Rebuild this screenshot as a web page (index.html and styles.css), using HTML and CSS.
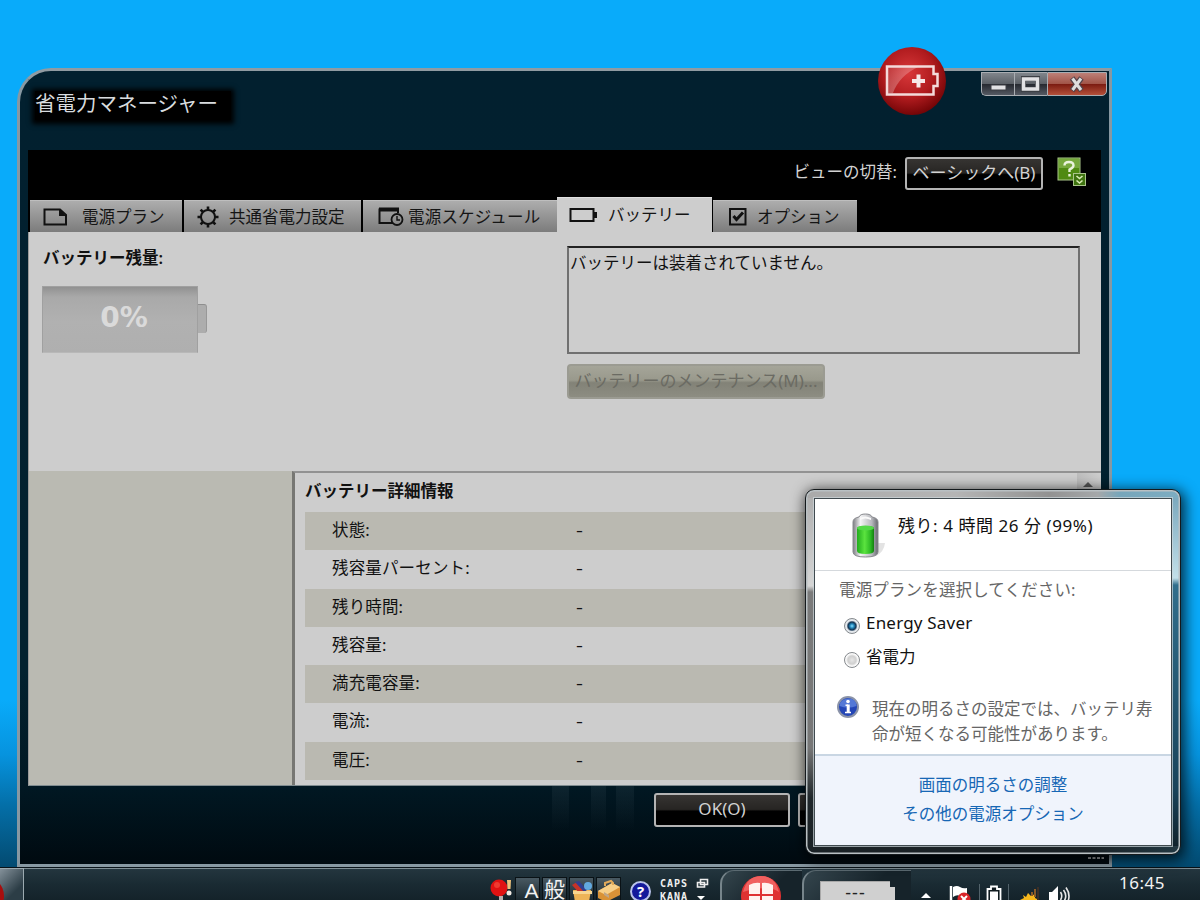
FILE: index.html
```html
<!DOCTYPE html>
<html lang="ja">
<head>
  <meta charset="UTF-8" />
  <meta name="viewport" content="width=device-width, initial-scale=1.0"/>
  <title>省電力マネージャー</title>
  <link rel="stylesheet" href="styles.css">
</head>
<body>
  <div class="desktop">

    <div class="window">
      <header class="window-header">
        <h1 class="window-title">省電力マネージャー</h1>
      </header>

      <svg class="window-logo" width="70" height="70" viewBox="0 0 70 70">
        <defs>
          <radialGradient id="ball" cx="45%" cy="38%" r="62%">
            <stop offset="0" stop-color="#d8383a"/>
            <stop offset=".6" stop-color="#b01b1e"/>
            <stop offset="1" stop-color="#740507"/>
          </radialGradient>
          <linearGradient id="shine" x1="0" y1="0" x2="1" y2="1">
            <stop offset="0" stop-color="#fff" stop-opacity=".1"/>
            <stop offset="1" stop-color="#fff" stop-opacity=".4"/>
          </linearGradient>
        </defs>
        <circle cx="35" cy="35" r="34" fill="url(#ball)"/>
        <path d="M11 21H41Q22 30 16 47H11Z" fill="url(#shine)"/>
        <path d="M10 20.500H56.500V28H60.500V40H56.500V48.500H10Z" fill="none" stroke="#f4dada" stroke-width="2.500"/>
        <path d="M35 35H48M41.500 28.500V41.500" stroke="#f6e8e8" stroke-width="4"/>
      </svg>

      <div class="window-controls">
        <span class="control"><svg width="32" height="23"><rect x="9" y="12" width="15" height="5" fill="#e2e2e4" stroke="#3c3f45"/></svg></span>
        <span class="control"><svg width="32" height="23"><path d="M8.500 5.500H22.500V16.500H8.500Z" fill="none" stroke="#3c3f45" stroke-width="5"/><path d="M8.500 6H22.500V16H8.500Z" fill="none" stroke="#e2e2e4" stroke-width="3.500"/></svg></span>
        <span class="control close"><svg width="58" height="23"><path d="M24 5L33.500 17.500M33.500 5L24 17.500" stroke="#54434a" stroke-width="5.500"/><path d="M24.500 5.500L33 17M33 5.500L24.500 17" stroke="#dedede" stroke-width="3"/></svg></span>
      </div>

      <main class="window-body">
        <div class="view-bar">
          <span class="view-label">ビューの切替:</span>
          <button class="btn btn-view">ベーシックへ(B)</button>
          <svg class="help-icon" width="30" height="30" viewBox="0 0 30 30">
            <rect x="1" y="1" width="22" height="22" fill="#4f8a12" stroke="#a9c58a"/>
            <rect x="2" y="2" width="20" height="9" fill="#76a83c"/>
            <path d="M7.500 8.500Q7.500 5 12 5Q16.500 5 16.500 8.500Q16.500 10.500 12.500 12.500V15M12.500 17V19.500" fill="none" stroke="#eaf2dc" stroke-width="2.400"/>
            <rect x="16.500" y="16.500" width="12" height="12" fill="#3f7410" stroke="#a9c58a"/>
            <path d="M19.500 19L22.500 21.500L25.500 19M19.500 23.500L22.500 26L25.500 23.500" fill="none" stroke="#d8ebb4" stroke-width="1.600"/>
          </svg>
        </div>

        <nav class="tabs">
          <a class="tab tab-plan">
            <svg width="26" height="20" viewBox="0 0 26 20"><path d="M1.500 2.500H17L23 8V17.500H1.500Z" fill="none" stroke="#111" stroke-width="2"/><path d="M16 2L23 9H16Z" fill="#111"/></svg>
            <span>電源プラン</span>
          </a>
          <a class="tab tab-common">
            <svg width="24" height="24" viewBox="0 0 24 24"><circle cx="12" cy="12" r="7" fill="none" stroke="#111" stroke-width="2"/><path d="M12 1.500V5M12 19V22.500M1.500 12H5M19 12H22.500M4.600 4.600L7 7M17 17L19.400 19.400M4.600 19.400L7 17M17 7L19.400 4.600" stroke="#111" stroke-width="2.600"/></svg>
            <span>共通省電力設定</span>
          </a>
          <a class="tab tab-schedule">
            <svg width="26" height="20" viewBox="0 0 26 20"><path d="M15 16H1.500V2.500H20V6" fill="none" stroke="#111" stroke-width="2"/><path d="M1 2.500H21" stroke="#111" stroke-width="4"/><circle cx="19" cy="12.500" r="5.500" fill="none" stroke="#111" stroke-width="1.800"/><path d="M19 9V13H22" fill="none" stroke="#111" stroke-width="1.400"/></svg>
            <span>電源スケジュール</span>
          </a>
          <a class="tab tab-battery active">
            <svg width="28" height="16" viewBox="0 0 28 16"><path d="M1.500 2H24.500V14H1.500Z" fill="none" stroke="#111" stroke-width="2"/><rect x="25" y="5" width="3" height="6" fill="#111"/></svg>
            <span>バッテリー</span>
          </a>
          <a class="tab tab-option">
            <svg width="20" height="20" viewBox="0 0 20 20"><path d="M2 2H17.500V17.500H2Z" fill="none" stroke="#111" stroke-width="2"/><path d="M5.500 9L8.500 12.500L15 5.500" fill="none" stroke="#111" stroke-width="3"/></svg>
            <span>オプション</span>
          </a>
        </nav>

        <section class="summary">
          <div class="remaining">
            <h2 class="label-strong">バッテリー残量:</h2>
            <div class="gauge">
              <div class="gauge-body">0%</div>
              <div class="gauge-tip"></div>
            </div>
          </div>
          <div class="status">
            <div class="status-box">バッテリーは装着されていません。</div>
            <button class="btn-disabled" disabled>バッテリーのメンテナンス(M)...</button>
          </div>
        </section>

        <section class="details">
          <aside class="battery-list"></aside>
          <div class="info">
            <h2 class="label-strong info-title">バッテリー詳細情報</h2>
            <dl class="info-rows">
              <div class="info-row"><dt>状態:</dt><dd>-</dd></div>
              <div class="info-row"><dt>残容量パーセント:</dt><dd>-</dd></div>
              <div class="info-row"><dt>残り時間:</dt><dd>-</dd></div>
              <div class="info-row"><dt>残容量:</dt><dd>-</dd></div>
              <div class="info-row"><dt>満充電容量:</dt><dd>-</dd></div>
              <div class="info-row"><dt>電流:</dt><dd>-</dd></div>
              <div class="info-row"><dt>電圧:</dt><dd>-</dd></div>
            </dl>
          </div>
          <div class="scrollbar"><span class="scroll-up"></span></div>
        </section>
      </main>

      <footer class="window-footer">
        <button class="btn btn-ok">OK(O)</button>
        <button class="btn btn-cancel"></button>
      </footer>
      <svg class="grip" width="18" height="4"><path d="M1 2H17" stroke="#a9adb0" stroke-width="2" stroke-dasharray="3 1.500"/></svg>
    </div>

    <!-- Barra de tareas -->
    <div class="taskbar">
      <div class="start"><span class="start-ball"></span></div>

      <div class="lang-bar">
        <svg class="lang-ball" width="24" height="26" viewBox="0 0 24 26">
          <circle cx="9" cy="11" r="8.500" fill="#e01212"/><circle cx="7" cy="8" r="3" fill="#f03a30"/>
          <path d="M9 19H13V26H9Z" fill="#b9adad"/>
          <path d="M17 3H21L20.500 12H17.500Z" fill="#eec27c"/><circle cx="19" cy="16" r="2.500" fill="#f3ebe4"/>
        </svg>
        <span class="lang-btn lang-latin">A</span>
        <span class="lang-btn">般</span>
        <span class="lang-btn">
          <svg width="24" height="24" viewBox="0 0 24 24"><path d="M3 12H21L19 24H5Z" fill="#eeb457"/><path d="M2 7L7 4L16 13L10 16Z" fill="#c63328"/><path d="M5 4L9 3L17 12L14 14Z" fill="#303f8f"/><circle cx="18" cy="8" r="4" fill="#62a9e0"/><path d="M3 13H22V16H3Z" fill="#f8d690"/></svg>
        </span>
        <span class="lang-btn">
          <svg width="24" height="24" viewBox="0 0 24 24"><path d="M1 13L15 5L23 9V17L9 24L1 20Z" fill="#d99237"/><path d="M1 13L15 5L23 9L9 17Z" fill="#f7cf88"/><path d="M8 8V5L14 3L16 5V7" fill="none" stroke="#e2aa59" stroke-width="2"/><path d="M7 14L12 17V20L7 17Z" fill="#bfa688"/></svg>
        </span>
        <span class="lang-help">?</span>
        <span class="lang-locks">CAPS<br>KANA</span>
        <svg class="lang-restore" width="13" height="22" viewBox="0 0 13 22"><path d="M4.500 1.500H11.500V6.500H4.500ZM1.500 4.500H8.500V9H1.500Z" fill="#23333a" stroke="#eee" stroke-width="1.600"/><path d="M1 18H9L5 22Z" fill="#fff"/></svg>
      </div>

      <div class="band band-power">
        <svg width="42" height="30" viewBox="0 0 42 30"><circle cx="21" cy="21" r="20" fill="#df3232"/><path d="M3 17Q7 1 21 1T39 17Q28 9 3 17Z" fill="#f0605f"/><path d="M9 10Q15 7 20 8V19H9ZM22 8Q27 7 33 10V19H22ZM9 21H20V30H9ZM22 21H33V30H22Z" fill="#fff2ee"/></svg>
      </div>
      <div class="band band-gauge">
        <div class="mini-gauge">---</div>
        <div class="mini-tip"></div>
      </div>

      <div class="tray">
        <span class="tray-arrow"></span>
        <svg class="tray-flag" width="24" height="22" viewBox="0 0 24 22"><path d="M2 2V22" stroke="#fff" stroke-width="2.500"/><path d="M4 3Q8 1 11 3T18 4V13Q14 14 11 12T4 13Z" fill="#fff"/><circle cx="15" cy="15" r="6.500" fill="#d9252a"/><path d="M12 12L18 18M18 12L12 18" stroke="#fff" stroke-width="2"/></svg>
        <svg class="tray-battery" width="30" height="24" viewBox="0 0 30 24"><path d="M.5 0V24M29.500 0V24" stroke="#53636b"/><path d="M8.500 5H12V2.500H18V5H21.500V24H8.500Z" fill="#101b20" stroke="#fff" stroke-width="1.800"/><path d="M11 7.500H19V24H11Z" fill="#fff"/></svg>
        <svg class="tray-network" width="24" height="22" viewBox="0 0 24 22"><path d="M4 11L7 13L9 9L12 12L16 10L16 14L20 16L17 22H2L4 18L1 16L5 14Z" fill="#f7b81c"/><path d="M12 8H14V12H12ZM15 5H17V13H15Z" fill="#8a5a28"/><path d="M18 3H20V22H18Z" fill="#3a2f28"/></svg>
        <svg class="tray-sound" width="24" height="24" viewBox="0 0 24 24"><path d="M1 8H4L10 2V22L4 17H1Z" fill="#fff"/><path d="M12.500 8Q15 12 12.500 16M15.500 6Q20 12 15.500 18M18 3.500Q24 12 18 21" fill="none" stroke="#e8e8e8" stroke-width="1.600"/></svg>
        <span class="clock">16:45</span>
      </div>
    </div>

    <!-- Menú de batería -->
    <div class="flyout">
      <div class="flyout-inner">
        <div class="flyout-head">
          <svg class="flyout-battery" width="36" height="46" viewBox="0 0 36 46">
            <defs>
              <linearGradient id="shell"><stop offset="0" stop-color="#7c7d82"/><stop offset=".3" stop-color="#f4f4f5"/><stop offset=".75" stop-color="#b7b8bd"/><stop offset="1" stop-color="#66676e"/></linearGradient>
              <linearGradient id="charge"><stop offset="0" stop-color="#21ac1d"/><stop offset=".45" stop-color="#5be33f"/><stop offset=".8" stop-color="#2cb824"/><stop offset="1" stop-color="#12810f"/></linearGradient>
            </defs>
            <path d="M25 43Q33 39 34 30L26 30Z" fill="#e3e3e3"/>
            <path d="M2 9Q2 5 8 4Q9 1 14.500 1Q20 1 21 4Q27 5 27 9V39Q27 44 14.500 44T2 39Z" fill="url(#shell)" stroke="#88898e"/>
            <path d="M9 5Q14 2 20 5V7Q14 4 9 7Z" fill="#fafafa"/>
            <path d="M6 15Q6 13 14.500 13T23 15V38Q23 41 14.500 41T6 38Z" fill="url(#charge)"/>
            <ellipse cx="14.500" cy="15" rx="8.500" ry="2.600" fill="#54d948"/>
          </svg>
          <span class="flyout-status">残り: 4 時間 26 分 (99%)</span>
        </div>
        <div class="flyout-body">
          <p class="flyout-prompt">電源プランを選択してください:</p>
          <label class="plan"><span class="radio checked"></span>Energy Saver</label>
          <label class="plan"><span class="radio"></span>省電力</label>
          <div class="notice">
            <svg width="22" height="22" viewBox="0 0 22 22"><circle cx="11" cy="11" r="10" fill="#2446b6" stroke="#8b93a8" stroke-width="2"/><path d="M2.500 10Q3 3 11 2.500T19.500 10Q11 13 2.500 10Z" fill="#5478d6"/><circle cx="11" cy="5.500" r="1.800" fill="#fff"/><path d="M8.500 9.200H11M8 16.500H14" fill="none" stroke="#fff" stroke-width="1.500"/><path d="M11.200 8.500V17" stroke="#fff" stroke-width="3"/></svg>
            <p>現在の明るさの設定では、バッテリ寿<br>命が短くなる可能性があります。</p>
          </div>
        </div>
        <div class="flyout-links">
          <a>画面の明るさの調整</a>
          <a>その他の電源オプション</a>
        </div>
      </div>
    </div>

  </div>
</body>
</html>
```

FILE: styles.css
```css
* {
  box-sizing: border-box;
}
body {
  margin: 0;
  font-family: "Noto Sans", "Noto Sans CJK JP", sans-serif;
  font-size: 16.5px;
  line-height: 24px;
  color: #111;
}
h1, h2, p, dl, dd {
  margin: 0;
  font-weight: normal;
}
svg {
  display: block;
  flex: none;
}
button {
  font: inherit;
  padding: 0;
}
.desktop {
  position: relative;
  width: 1200px;
  height: 900px;
  overflow: hidden;
  background: linear-gradient(#09abfa 0, #09abfa 700px, #0693de 755px, #046fa8 805px, #034a70 868px);
}

/* Ventana principal */
.window {
  position: absolute;
  left: 17px;
  top: 68px;
  width: 1095px;
  height: 799px;
  display: flex;
  flex-direction: column;
  padding: 0 8px;
  border: 3px solid #8798a2;
  border-top-color: #909ba2;
  border-radius: 34px 0 0 0;
  background: linear-gradient(#02202f 0, #02212f 600px, #011823 715px, #000a10 100%);
}
.window-header {
  height: 79px;
  padding: 20px 0 0 4px;
}
.window-title {
  display: inline-block;
  width: 196px;
  height: 29px;
  margin-left: 3px;
  font-size: 20.5px;
  line-height: 25px;
  color: #d8dcdf;
  white-space: nowrap;
  background: #000;
  box-shadow: 0 1px 5px 3px #000;
}
.window-logo {
  position: absolute;
  left: 857px;
  top: -25px;
}
.window-controls {
  position: absolute;
  top: 1px;
  right: 2px;
  display: flex;
}
.control {
  width: 33px;
  height: 24px;
  border: 1px solid #a9adb2;
  border-right-width: 0;
  background: linear-gradient(#80858b 0, #5d6268 48%, #25282f 50%, #555a63 100%);
}
.control:first-child {
  border-radius: 0 0 0 5px;
}
.control.close {
  width: 60px;
  border-right-width: 1px;
  border-radius: 0 0 5px 0;
  background: linear-gradient(#bd8077 0, #a25549 48%, #7a1a10 50%, #b4503a 100%);
}

.window-body {
  display: flex;
  flex-direction: column;
  height: 636px;
  background: #000;
}
.view-bar {
  display: flex;
  align-items: flex-start;
  justify-content: flex-end;
  height: 47px;
  padding: 7px 14px 0 0;
}
.view-label {
  margin: 3px 8px 0 0;
  color: #d2d2d2;
}
.btn {
  border: 2px solid #b4b4b4;
  border-radius: 3px;
  background: linear-gradient(#363432 0, #272523 48%, #000 54%, #000 100%);
  color: #d2d2d2;
  white-space: nowrap;
}
.btn-view {
  width: 138px;
  height: 33px;
  margin-right: 14px;
  padding-bottom: 2px;
  font-size: 17px;
  line-height: 25px;
}

.tabs {
  display: flex;
  align-items: flex-end;
  gap: 2px;
  height: 35px;
  padding-left: 2px;
}
.tab {
  display: flex;
  align-items: center;
  height: 32px;
  border-top: 1px solid #bebebe;
  background: linear-gradient(#adadad, #7c7c7c);
  color: #151515;
  white-space: nowrap;
}
.tab-plan {
  width: 152px;
  padding-left: 13px;
  gap: 13px;
}
.tab-common {
  width: 177px;
  padding-left: 12px;
  gap: 9px;
}
.tab-schedule {
  width: 194px;
  padding-left: 15px;
  gap: 4px;
  letter-spacing: 0.2px;
}
.tab-option {
  width: 144px;
  margin-left: -1px;
  padding-left: 15px;
  gap: 9px;
}
.tab.active {
  width: 155px;
  height: 35px;
  margin-left: -2px;
  padding-left: 12px;
  gap: 11px;
  border-color: #e0e0e0;
  background: #cdcdcd;
}

.summary {
  display: flex;
  justify-content: space-between;
  height: 239px;
  padding: 14px 21px 0 14px;
  border-left: 1px solid #9a9a9a;
  background: #cdcdcd;
}
.label-strong {
  font-size: 16.5px;
  font-weight: 600;
}
.gauge {
  display: flex;
  align-items: center;
  margin-top: 16px;
  margin-left: -1px;
}
.gauge-body {
  width: 156px;
  height: 67px;
  padding-left: 8px;
  border: 1px solid #a0a0a0;
  border-bottom-color: #b8b8b8;
  background: linear-gradient(#919191 0, #a9a9a9 10px, #b1b1b1 35px, #afafaf);
  color: #dadada;
  font-family: "DejaVu Sans", sans-serif;
  font-size: 28px;
  font-weight: bold;
  line-height: 62px;
  text-align: center;
}
.gauge-tip {
  width: 9px;
  height: 29px;
  margin-bottom: 2px;
  border-radius: 0 3px 3px 0;
  border-top: 1px solid #8e8e8e;
  border-right: 1px solid #989898;
  background: #adadad;
}
.status {
  width: 513px;
}
.status-box {
  height: 108px;
  padding: 3px 1px;
  border: 2px solid #707070;
  border-top-color: #222;
}
.btn-disabled {
  width: 258px;
  height: 35px;
  margin-top: 10px;
  padding-bottom: 2px;
  border: 2px solid #9b9b92;
  border-radius: 4px;
  background: linear-gradient(#a5a599 0, #99998c 46%, #828277 54%, #8d8d82 100%);
  color: #6b6b63;
  font-size: 17px;
  line-height: 28px;
  white-space: nowrap;
}

.details {
  display: flex;
  height: 315px;
  border-left: 1px solid #9a9a9a;
  border-bottom: 1px solid #7f8b8f;
}
.battery-list {
  width: 263px;
  background: #babab2;
}
.info {
  flex: 1;
  border-left: 3px solid #777773;
  border-top: 2px solid #929292;
  background: #cdcdcd;
  overflow: hidden;
}
.info-title {
  height: 39px;
  padding: 6px 0 0 10px;
}
.info-rows {
  padding-left: 10px;
}
.info-row {
  display: flex;
  height: 38.3px;
  padding: 6px 0 0 27px;
  letter-spacing: 0.15px;
}
.info-row:nth-child(odd) {
  background: #bab9b1;
}
.info-row dt {
  width: 244px;
}
.info-row dd {
  transform: scaleX(1.3);
  transform-origin: left;
}
.scrollbar {
  width: 24px;
  padding: 9px 0 0 6px;
  border-top: 2px solid #929292;
  background: linear-gradient(90deg, #bcbcbc, #cecece);
}
.scroll-up {
  display: block;
  width: 0;
  border: 5px solid transparent;
  border-top: 0;
  border-bottom-color: #555;
}

.window-footer {
  display: flex;
  align-items: flex-start;
  gap: 8px;
  height: 50px;
  padding: 7px 0 0 626px;
  background:
    linear-gradient(rgba(160,180,190,0.08), transparent) 524px 0 / 17px 45px no-repeat,
    linear-gradient(rgba(160,180,190,0.08), transparent) 563px 0 / 15px 45px no-repeat,
    linear-gradient(rgba(160,180,190,0.08), transparent) 588px 0 / 18px 45px no-repeat;
}
.btn-ok {
  width: 136px;
  height: 34px;
  padding-bottom: 3px;
  font-size: 17px;
  line-height: 24px;
}
.btn-cancel {
  flex: none;
  width: 136px;
  height: 34px;
}
.grip {
  position: absolute;
  right: 4px;
  bottom: 4px;
}

/* Barra de tareas */
.taskbar {
  position: absolute;
  left: 0;
  top: 867px;
  width: 1200px;
  height: 33px;
  display: flex;
  border-top: 1px solid #081218;
  background: linear-gradient(#24363f 0, #1a2b33 50%, #14232a 100%);
  box-shadow: inset 0 1px 0 #7d8c93;
  overflow: hidden;
}
.start {
  width: 24px;
  height: 33px;
  padding-top: 7px;
  border: 1px solid #9caab0;
  border-left: 0;
  background: linear-gradient(135deg, #84919a, #2c3d46 70%);
}
.start-ball {
  display: block;
  width: 40px;
  height: 40px;
  margin-left: -36px;
  border-radius: 50%;
  background: #a80e0e;
}
.lang-bar {
  display: flex;
  align-items: flex-start;
  width: 696px;
  padding: 9px 0 0 466px;
}
.lang-ball {
  margin-right: 1px;
}
.lang-btn {
  flex: none;
  width: 25px;
  height: 24px;
  margin-right: 2px;
  border: 1px solid #0a1216;
  background: linear-gradient(#495962, #1b2930);
  color: #f2f2f2;
  font-size: 21px;
  line-height: 23px;
  text-align: center;
}
.lang-latin {
  padding-left: 8px;
  font-family: "Liberation Sans", sans-serif;
  line-height: 25px;
}
.lang-help {
  flex: none;
  width: 21px;
  height: 21px;
  margin: 4px 0 0 7px;
  border: 2px solid #b8c2ea;
  border-radius: 50%;
  background: #13199b;
  color: #fff;
  font-size: 15px;
  font-weight: bold;
  line-height: 17px;
  text-align: center;
}
.lang-locks {
  margin: 0 0 0 9px;
  color: #f0f0f0;
  font-family: "DejaVu Sans Mono", monospace;
  font-size: 10px;
  font-weight: bold;
  letter-spacing: 1px;
  line-height: 13px;
}
.lang-restore {
  margin: 1px 0 0 8px;
}
.band {
  display: flex;
  align-items: flex-start;
  height: 36px;
  margin-top: 2px;
  border-left: 2px solid #77858b;
  border-top: 1px solid #5b6a71;
  border-radius: 14px 0 0 0;
  background: linear-gradient(135deg, #35464e, #16232a 60%);
}
.band-power {
  width: 82px;
  padding: 4px 0 0 18px;
}
.band-gauge {
  width: 109px;
  padding: 10px 0 0 16px;
}
.mini-gauge {
  width: 70px;
  height: 26px;
  border: 1px solid #a8a8a8;
  border-right: 0;
  background: #d0d0d0;
  color: #222;
  font-size: 18px;
  line-height: 20px;
  text-align: center;
  letter-spacing: 1px;
}
.mini-tip {
  width: 5px;
  height: 20px;
  margin-top: 6px;
  background: #d0d0d0;
}
.tray {
  display: flex;
  align-items: flex-start;
  padding: 16px 0 0 10px;
}
.tray-arrow {
  width: 0;
  margin: 9px 18px 0 0;
  border: 5px solid transparent;
  border-top: 0;
  border-bottom-color: #fff;
}
.tray-battery {
  margin: 0 10px 0 6px;
}
.tray-network {
  margin-right: 5px;
}
.clock {
  margin: -13px 0 0 47px;
  color: #f2f2f2;
  font-size: 17px;
  letter-spacing: 0.5px;
}

/* Menú emergente */
.flyout {
  position: absolute;
  left: 805px;
  top: 489px;
  width: 376px;
  height: 366px;
  padding: 8px;
  border: 1px solid #14191c;
  border-radius: 9px;
  background:
    linear-gradient(#b0b0b0 0, #d5d5d5 88px, #7b7b7b 94px, #777 250px, #20272b 300px, #1b2226 100%) 0 8px / 12px 348px no-repeat,
    linear-gradient(#7ba9be 0, #c2dfe9 80px, #316e8c 87px, #19445b 290px, #10222c 100%) 100% 8px / 12px 348px no-repeat,
    linear-gradient(90deg, #aaa 0, #b5b5b5 40%, #929292 65%, #a5a8aa 78%, #76a6bb 84%, #7dadc2 100%) top / 100% 12px no-repeat,
    linear-gradient(90deg, #1b2226, #1b2226 75%, #223842) bottom / 100% 12px no-repeat;
  box-shadow: inset 0 0 0 1.5px #b9c0c3, 2px 3px 14px 2px rgba(0,0,0,0.75);
}
.flyout-inner {
  display: flex;
  flex-direction: column;
  height: 100%;
  border: 1px solid #404a4f;
  outline: 1px solid rgba(205,215,220,0.7);
  background: #fff;
}
.flyout-head {
  display: flex;
  height: 72px;
  padding: 14px 0 0 36px;
  border-bottom: 1px solid #d5d9dd;
}
.flyout-status {
  margin: 1px 0 0 11px;
  font-size: 17px;
  letter-spacing: 0.55px;
  white-space: nowrap;
}
.flyout-body {
  height: 183px;
  padding: 7px 0 0 24px;
}
.flyout-prompt {
  color: #666;
  letter-spacing: 0.15px;
}
.plan {
  display: flex;
  align-items: center;
  height: 24px;
  margin: 9px 0 10px 5px;
  gap: 6px;
  font-size: 17px;
  letter-spacing: 0.2px;
}
.plan + .plan {
  font-size: 16.5px;
  letter-spacing: 0;
}
.radio {
  width: 16px;
  height: 16px;
  margin-top: 5px;
  border: 1px solid #85898d;
  border-radius: 50%;
  background: radial-gradient(#e6e6e6 0, #cfcfcf 4px, #fafafa 6px);
}
.radio.checked {
  background: radial-gradient(circle at 50% 50%, #8ae0ff 0, #2187bb 2px, #12304e 4px, #e4e8ec 5.5px);
}
.notice {
  display: flex;
  gap: 13px;
  margin: 27px 0 0 -2px;
  color: #666;
  line-height: 25px;
  white-space: nowrap;
}
.flyout-links {
  flex: 1;
  display: flex;
  flex-direction: column;
  align-items: center;
  gap: 5px;
  padding-top: 17px;
  border-top: 2px solid #c9d6e3;
  background: #f0f4fc;
  color: #1767b5;
}
```
